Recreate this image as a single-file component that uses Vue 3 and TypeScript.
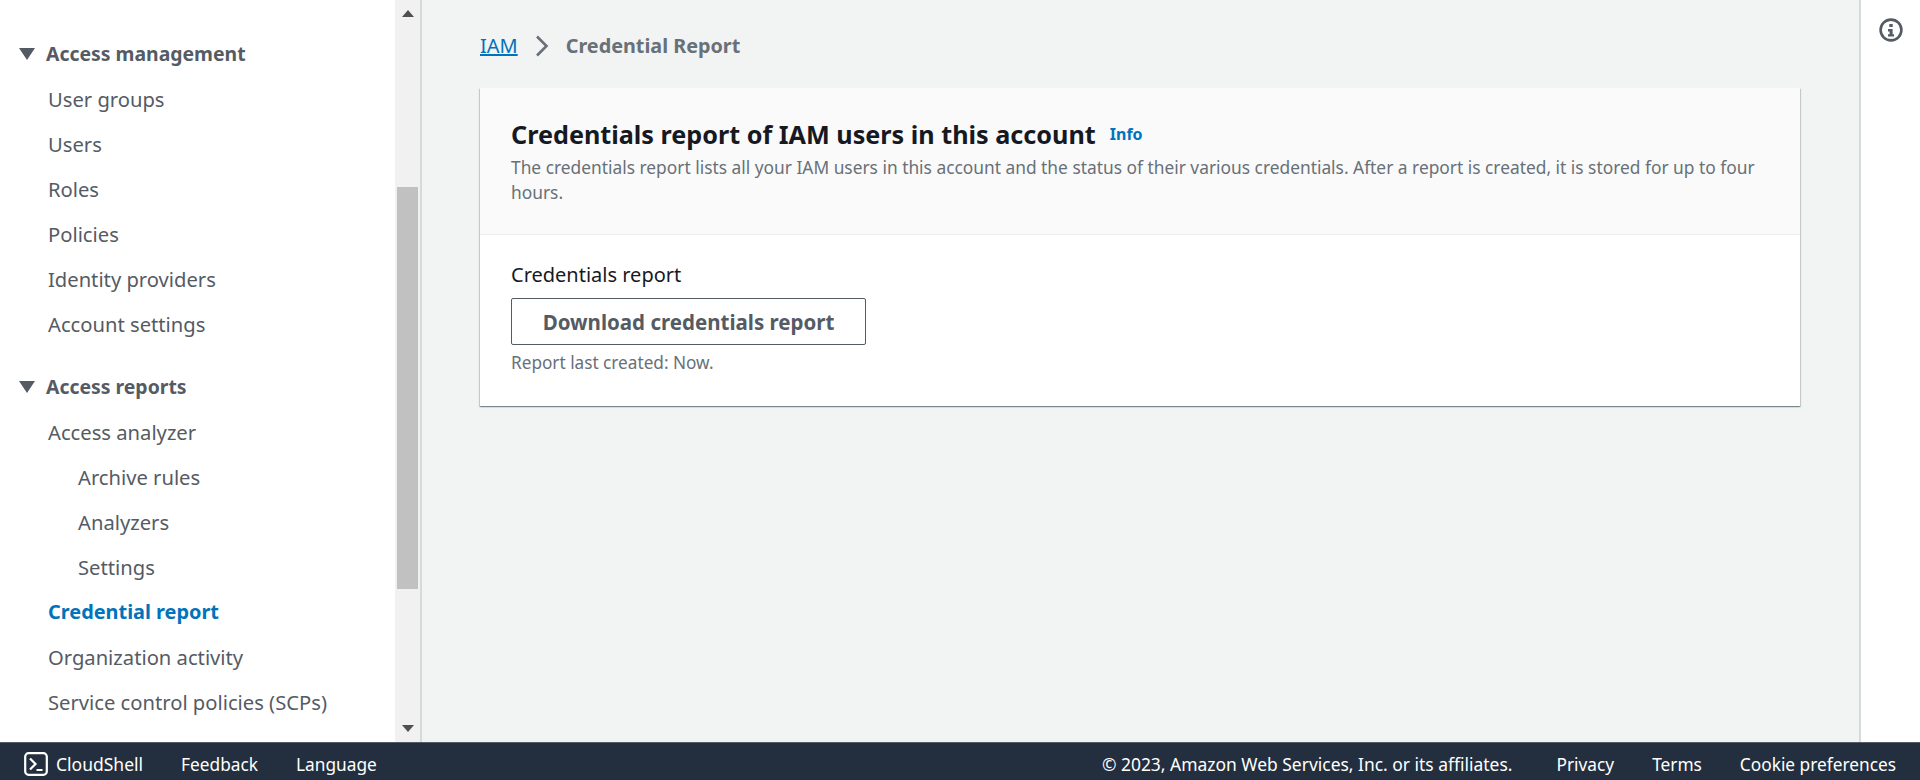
<template>
  <div class="console">
    <div class="workspace">
      <aside class="sidenav">
        <nav class="nav-list">
          <section v-for="group in navGroups" :key="group.title" class="nav-group">
            <h3 class="group-title">
              <svg class="caret" viewBox="0 0 16 14"><path d="M0 1h16L8 13z" /></svg>
              {{ group.title }}
            </h3>
            <a
              v-for="item in group.items"
              :key="item.label"
              class="nav-item"
              :class="{ nested: item.nested, active: item.active }"
            >{{ item.label }}</a>
          </section>
        </nav>
        <div class="scrollbar">
          <button class="scroll-arrow"><svg viewBox="0 0 12 7"><path d="M0 7h12L6 0z" /></svg></button>
          <div class="scroll-track"><div class="scroll-thumb"></div></div>
          <button class="scroll-arrow"><svg viewBox="0 0 12 7"><path d="M0 0h12L6 7z" /></svg></button>
        </div>
      </aside>

      <main class="content">
        <div class="breadcrumbs">
          <a class="crumb-link">IAM</a>
          <svg class="crumb-sep" viewBox="0 0 14 22"><path d="M2 1.5l9.5 9.5-9.5 9.5" /></svg>
          <span class="crumb-current">Credential Report</span>
        </div>

        <div class="card">
          <header class="card-header">
            <div class="card-title-row">
              <h2 class="card-title">Credentials report of IAM users in this account</h2>
              <a class="info-link">Info</a>
            </div>
            <p class="card-desc">The credentials report lists all your IAM users in this account and the status of their various credentials. After a report is created, it is stored for up to four hours.</p>
          </header>
          <div class="card-body">
            <div class="field-label">Credentials report</div>
            <button class="download-btn">Download credentials report</button>
            <div class="field-hint">Report last created: Now.</div>
          </div>
        </div>
      </main>

      <aside class="tools">
        <svg class="info-icon" viewBox="0 0 24 24">
          <circle cx="12" cy="12" r="10.4" />
          <rect class="dot" x="10.3" y="6" width="3.4" height="3" />
          <path class="dot" d="M9 11h4.6v5.2H15V18.6H9v-2.4h1.6v-2.8H9z" />
        </svg>
      </aside>
    </div>

    <footer class="footer">
      <div class="footer-left">
        <a class="cloudshell">
          <svg class="shell-icon" viewBox="0 0 24 24">
            <rect x="1.2" y="1.2" width="21.6" height="21.6" rx="3.4" />
            <path d="M6 6.5l5.5 5.5L6 17.5M12.5 18h6" />
          </svg>
          CloudShell
        </a>
        <a>Feedback</a>
        <a>Language</a>
      </div>
      <div class="footer-right">
        <span class="copyright">© 2023, Amazon Web Services, Inc. or its affiliates.</span>
        <a>Privacy</a>
        <a>Terms</a>
        <a>Cookie preferences</a>
      </div>
    </footer>
  </div>
</template>

<script setup lang="ts">
interface NavItem {
  label: string
  nested?: boolean
  active?: boolean
}

const navGroups: { title: string; items: NavItem[] }[] = [
  {
    title: 'Access management',
    items: [
      { label: 'User groups' },
      { label: 'Users' },
      { label: 'Roles' },
      { label: 'Policies' },
      { label: 'Identity providers' },
      { label: 'Account settings' }
    ]
  },
  {
    title: 'Access reports',
    items: [
      { label: 'Access analyzer' },
      { label: 'Archive rules', nested: true },
      { label: 'Analyzers', nested: true },
      { label: 'Settings', nested: true },
      { label: 'Credential report', active: true },
      { label: 'Organization activity' },
      { label: 'Service control policies (SCPs)' }
    ]
  }
]
</script>

<style>
html,
body {
  margin: 0;
  background: #f2f3f3;
}
</style>

<style scoped>
.console {
  display: flex;
  flex-direction: column;
  height: 780px;
  overflow: hidden;
  font-family: "Noto Sans", "Open Sans", "Liberation Sans", sans-serif;
  font-size: 20px;
  color: #545b64;
}

.workspace {
  flex: 1;
  display: flex;
  min-height: 0;
}

.sidenav {
  flex: 0 0 422px;
  display: flex;
  background: #fff;
  border-right: 2px solid #d5dbdb;
  box-sizing: border-box;
}

.nav-list {
  flex: 1;
  padding-top: 31px;
}

.nav-group + .nav-group {
  margin-top: 18px;
}

.group-title {
  display: flex;
  align-items: center;
  gap: 11px;
  height: 45px;
  margin: 0;
  padding-left: 19px;
  font-size: 19.4px;
  font-weight: 700;
  color: #545b64;
}

.caret {
  width: 16px;
  height: 14px;
  fill: #545b64;
}

.nav-item {
  display: flex;
  align-items: center;
  height: 45px;
  padding-left: 48px;
  font-size: 20.2px;
}

.nav-item.nested {
  padding-left: 78px;
}

.nav-item.active {
  color: #0073bb;
  font-weight: 700;
  font-size: 19.9px;
}

.scrollbar {
  flex: 0 0 25px;
  display: flex;
  flex-direction: column;
  background: #f1f1f1;
}

.scroll-arrow {
  height: 27px;
  padding: 0;
  border: 0;
  background: none;
  display: flex;
  align-items: center;
  justify-content: center;
}

.scroll-arrow svg {
  width: 12px;
  height: 7px;
  fill: #505050;
}

.scroll-track {
  flex: 1;
  padding-top: 160px;
}

.scroll-thumb {
  height: 402px;
  margin: 0 2px;
  background: #c1c1c1;
}

.content {
  flex: 1;
  min-width: 0;
  padding: 30px 59px 0 58px;
  background: #f2f3f3;
}

.breadcrumbs {
  display: flex;
  align-items: center;
  height: 31px;
  margin-bottom: 27px;
}

.crumb-link {
  color: #0073bb;
  text-decoration: underline;
}

.crumb-sep {
  width: 14px;
  height: 22px;
  margin: 0 17px 0 17px;
  fill: none;
  stroke: #687078;
  stroke-width: 2.6;
}

.crumb-current {
  color: #687078;
  font-weight: 700;
  font-size: 19.8px;
}

.card {
  background: #fff;
  box-shadow: 0 1px 1px 0 rgba(0, 28, 36, 0.3), 1px 1px 1px 0 rgba(0, 28, 36, 0.15), -1px 1px 1px 0 rgba(0, 28, 36, 0.15);
}

.card-header {
  padding: 28px 31px 30px;
  background: #fafafa;
  border-bottom: 1px solid #eaeded;
}

.card-title-row {
  display: flex;
  align-items: center;
  gap: 14px;
}

.card-title {
  margin: 0;
  font-size: 25.2px;
  font-weight: 700;
  line-height: 36px;
  color: #16191f;
}

.info-link {
  color: #0073bb;
  font-size: 16px;
  font-weight: 700;
}

.card-desc {
  margin: 3px 0 0;
  font-size: 17.35px;
  line-height: 24.5px;
  color: #687078;
}

.card-body {
  padding: 27px 31px 31px;
}

.field-label {
  font-size: 20px;
  line-height: 26px;
  color: #16191f;
}

.download-btn {
  display: block;
  width: 355px;
  height: 47px;
  margin-top: 10px;
  padding: 0;
  background: #fff;
  border: 1px solid #545b64;
  border-radius: 2px;
  font: inherit;
  font-size: 20.5px;
  font-weight: 700;
  color: #545b64;
}

.field-hint {
  margin-top: 6px;
  font-size: 17.2px;
  line-height: 24px;
  color: #687078;
}

.tools {
  flex: 0 0 61px;
  background: #fff;
  border-left: 2px solid #d5dbdb;
  box-sizing: border-box;
  display: flex;
  justify-content: center;
  padding: 18px 0 0 0;
}

.info-icon {
  width: 24px;
  height: 24px;
}

.info-icon circle {
  fill: none;
  stroke: #545b64;
  stroke-width: 2.6;
}

.info-icon .dot {
  fill: #545b64;
}

.footer {
  flex: 0 0 38px;
  display: flex;
  align-items: center;
  justify-content: space-between;
  padding: 5px 24px 0;
  background: #232f3e;
  border-top: 1px solid #545b64;
  box-sizing: border-box;
  color: #fff;
  font-size: 17.3px;
}

.footer-left,
.footer-right {
  display: flex;
  align-items: center;
}

.footer-left a {
  margin-right: 38px;
}

.footer-right a {
  margin-left: 38px;
}

.cloudshell {
  display: flex;
  align-items: center;
  gap: 8px;
  font-size: 17.5px;
}

.shell-icon {
  width: 24px;
  height: 24px;
  fill: none;
  stroke: #fff;
  stroke-width: 2.2;
}

.copyright {
  margin-right: 6px;
  font-size: 17.45px;
}
</style>
